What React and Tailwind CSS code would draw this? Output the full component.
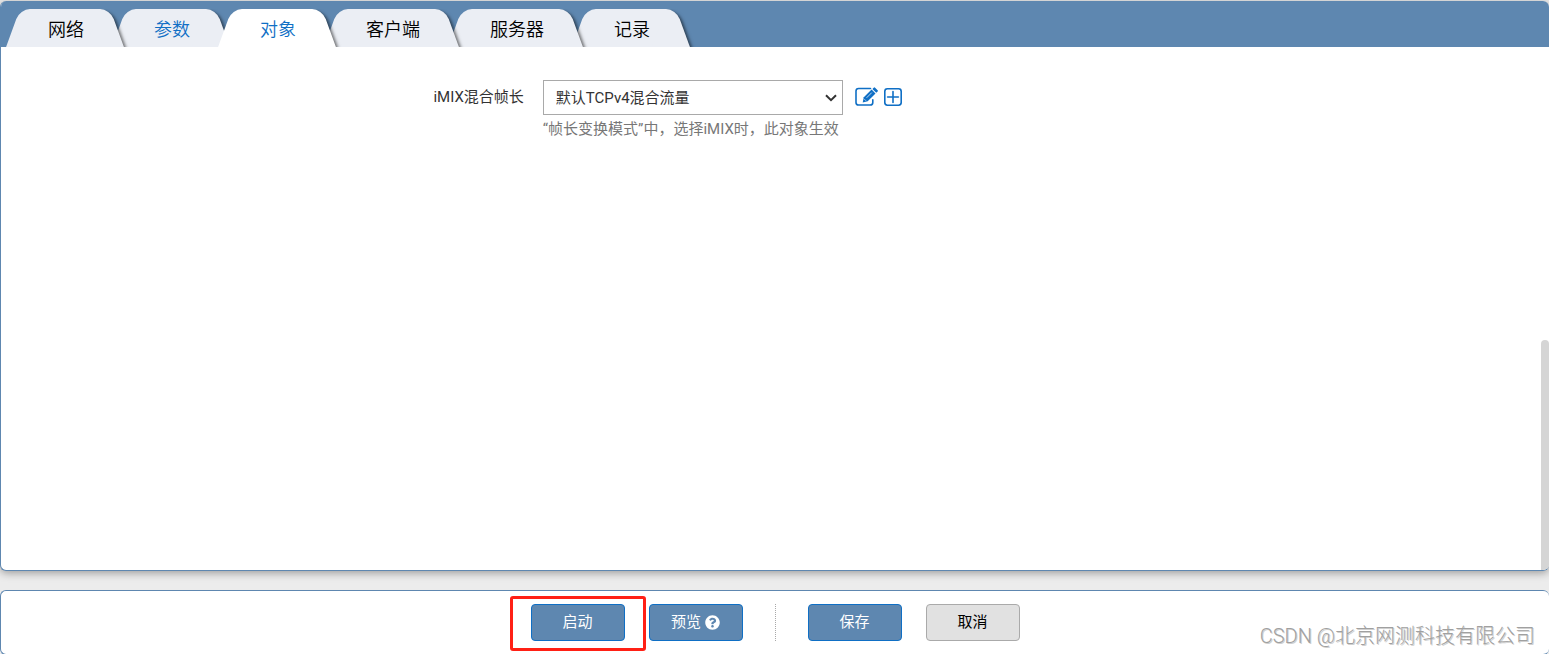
import { useState } from 'react'
import { FaQuestionCircle } from 'react-icons/fa'
import clsx from 'clsx'

// z va de mayor a menor: cada pestaña proyecta su sombra sobre la siguiente
const tabs = [
  { id: 'network', label: '网络', z: 'z-[6]' },
  { id: 'params', label: '参数', z: 'z-[5]', touched: true },
  { id: 'objects', label: '对象', z: 'z-[4]', touched: true },
  { id: 'client', label: '客户端', z: 'z-[3]' },
  { id: 'server', label: '服务器', z: 'z-[2]' },
  { id: 'record', label: '记录', z: 'z-[1]' }
]

function Tab({ tab, active, onClick }) {
  return (
    <button
      type="button"
      role="tab"
      aria-selected={active}
      onClick={onClick}
      className={clsx(
        'relative isolate h-full px-[35px] pt-1 text-lg leading-8 font-[350] cursor-pointer',
        active ? 'z-10' : tab.z,
        active || tab.touched ? 'text-[#0f6fc5]' : 'text-black'
      )}
    >
      <span
        className={clsx(
          'absolute inset-y-0 right-[3px] -z-20 w-3/4 skew-x-[20deg] rounded-tr-[10px] shadow-[2px_2px_3px_rgba(0,0,0,0.5)]',
          active ? 'bg-white' : 'bg-[#ebeef4]'
        )}
      />
      <span
        className={clsx(
          'absolute inset-y-0 left-0 -z-10 w-3/4 -skew-x-[20deg] rounded-tl-[10px]',
          active ? 'bg-white' : 'bg-[#ebeef4]'
        )}
      />
      {tab.label}
    </button>
  )
}

function EditIcon() {
  return (
    <svg viewBox="0 0 23 19" className="h-[19px] w-[23px]" fill="none">
      <path
        d="M15.5 1.5H3.6A2.6 2.6 0 0 0 1 4.1v11.3A2.6 2.6 0 0 0 3.6 18h11.6a2.6 2.6 0 0 0 2.6-2.6v-2.6"
        stroke="currentColor"
        strokeWidth="1.6"
        strokeLinecap="round"
      />
      <path d="M16.6 2.6l3.9 3.9-7.8 7.7-5 1.2 1.1-5.1z" fill="currentColor" />
      <path d="M17.4 1.9l1.3-1.2a1 1 0 0 1 1.4 0l2.5 2.5a1 1 0 0 1 0 1.4l-1.3 1.2z" fill="currentColor" />
      <path d="M11.6 10.8l5.2-5.2M9.4 12.2l1.5 1.5" stroke="white" strokeWidth="0.7" />
    </svg>
  )
}

function AddIcon() {
  return (
    <svg viewBox="0 0 18 18" className="size-[18px]" fill="none" stroke="currentColor" strokeWidth="1.6">
      <rect x="0.8" y="0.8" width="16.4" height="16.4" rx="2.6" />
      <path d="M9 3.6v10.8M3.6 9h10.8" strokeLinecap="round" />
    </svg>
  )
}

function ActionButton({ children, muted, ...props }) {
  return (
    <button
      type="button"
      className={clsx(
        'flex h-[37px] w-[94px] items-center justify-center gap-1 rounded border text-[15px] cursor-pointer',
        muted ? 'border-[#aaaaaa] bg-[#e1e1e1] text-black' : 'border-[#0f6fc5] bg-[#5e87b0] text-white'
      )}
      {...props}
    >
      {children}
    </button>
  )
}

export default function App() {
  const [activeTab, setActiveTab] = useState('objects')
  const [mix, setMix] = useState('tcpv4')

  return (
    <div className="relative flex min-h-screen flex-col gap-[19px] overflow-hidden bg-[#ececec] pt-px font-[Roboto,'Noto_Sans_CJK_SC',sans-serif] text-[15px] text-[#333333]">
      <section className="flex flex-1 flex-col overflow-hidden rounded-md border border-t-0 border-r-0 border-[#5e87b0] bg-white shadow-[0_2px_8px_rgba(0,0,0,0.35)]">
        <div className="bg-[#5e87b0] pt-2">
          <div role="tablist" className="flex h-[38px] overflow-hidden pl-3">
            {tabs.map((tab) => (
              <Tab key={tab.id} tab={tab} active={tab.id === activeTab} onClick={() => setActiveTab(tab.id)} />
            ))}
          </div>
        </div>

        <div className="relative flex-1 pt-[33px]">
          <div className="flex">
            <label htmlFor="imix" className="w-[35%] shrink-0 pr-[19px] text-right leading-[34px]">
              iMIX混合帧长
            </label>
            <div>
              <div className="flex items-center gap-3">
                <div className="relative">
                  <select
                    id="imix"
                    value={mix}
                    onChange={(e) => setMix(e.target.value)}
                    className="h-[35px] w-[300px] appearance-none border border-[#a9a9a9] bg-white px-3 pt-px text-[15px]"
                  >
                    <option value="tcpv4">默认TCPv4混合流量</option>
                  </select>
                  <svg
                    viewBox="0 0 12 8"
                    className="pointer-events-none absolute top-[14px] right-[6px] h-2 w-3"
                    fill="none"
                    stroke="#333333"
                    strokeWidth="2"
                  >
                    <path d="M1 1.2l5 5 5-5" />
                  </svg>
                </div>
                <div className="flex items-center gap-1.5 pb-0.5 text-[#0f6fc5]">
                  <button type="button" aria-label="编辑" className="cursor-pointer">
                    <EditIcon />
                  </button>
                  <button type="button" aria-label="新增" className="cursor-pointer">
                    <AddIcon />
                  </button>
                </div>
              </div>
              <p className="leading-7 text-[#777777]">“帧长变换模式”中，选择iMIX时，此对象生效</p>
            </div>
          </div>

          {/* Barra de desplazamiento */}
          <div className="absolute right-0 bottom-0 h-[44%] w-2 rounded-t bg-[#d5d5d5]" />
        </div>
      </section>

      <footer className="-mb-px flex h-[65px] items-center justify-center gap-6 rounded-md border border-r-0 border-[#5e87b0] bg-white">
        <div className="relative">
          <ActionButton>启动</ActionButton>
          <span className="pointer-events-none absolute -inset-x-[21px] -top-2 -bottom-2.5 rounded-[3px] border-3 border-[#ff2015]" />
        </div>
        <ActionButton>
          预览
          <FaQuestionCircle className="size-[15px]" />
        </ActionButton>
        <div className="mx-2 h-[37px] border-l border-dotted border-[#a9a9a9]" />
        <ActionButton>保存</ActionButton>
        <ActionButton muted>取消</ActionButton>
      </footer>

      <p className="pointer-events-none absolute right-3.5 bottom-1 text-xl leading-7 font-light text-[#a0a0a0] [text-shadow:1px_1px_0_#d0d0d0]">
        CSDN @北京网测科技有限公司
      </p>
    </div>
  )
}
